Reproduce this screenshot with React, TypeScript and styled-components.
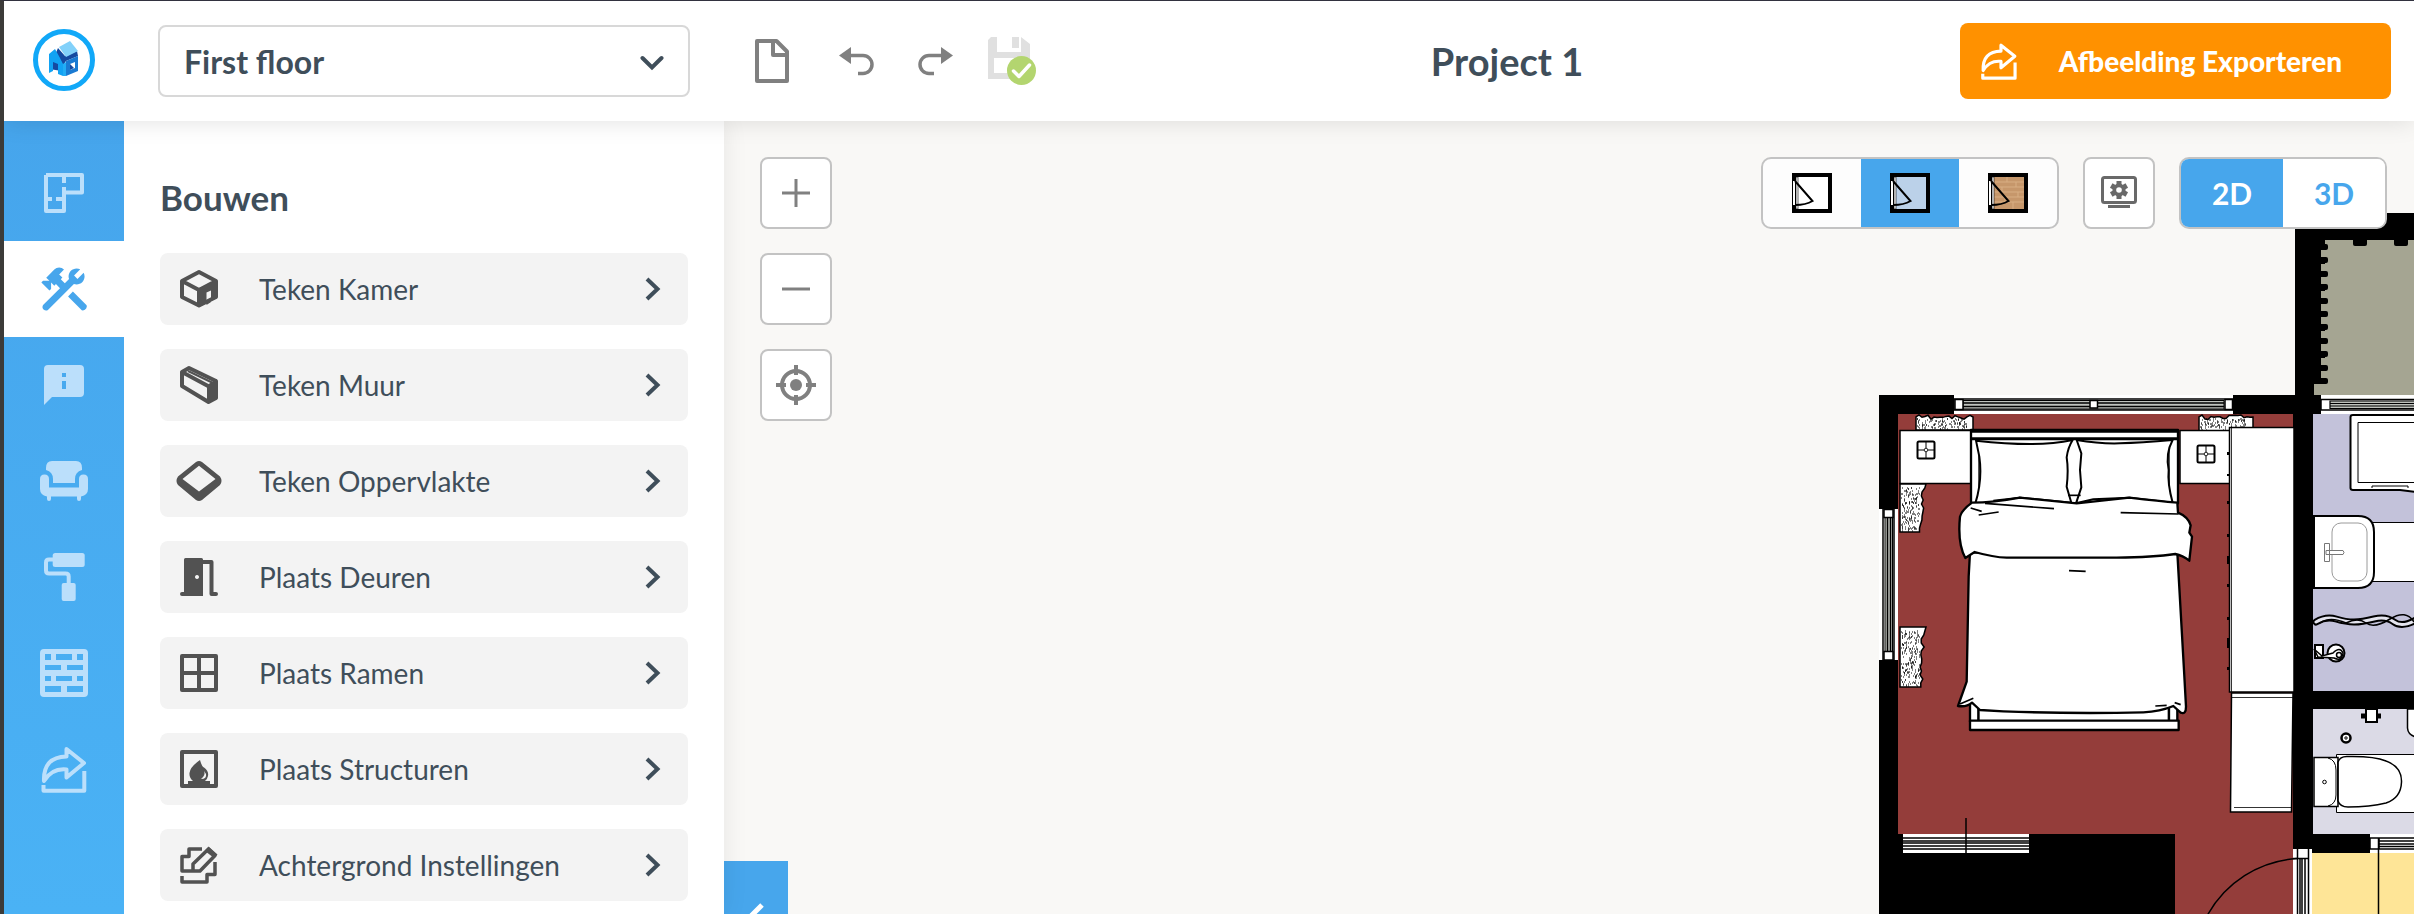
import React from "react";
import styled, { createGlobalStyle } from "styled-components";

const GlobalStyle = createGlobalStyle`
  *, *::before, *::after { box-sizing: border-box; }
  body { margin: 0; font-family: Lato, "Open Sans", sans-serif; color: #3f4e5a; background: #f9f8f6; }
  button, select, h1, h2 { font-family: inherit; color: inherit; margin: 0; }
  button { cursor: pointer; border: 0; padding: 0; background: none; }
  svg { display: block; flex: none; }
`;

const blue = "#47a6ec";
const line = "#c3c3c3";

const Shell = styled.div`
  height: 100vh;
  display: flex;
  flex-direction: column;
  overflow: hidden;
  border-left: 4px solid #3c3b39;
  border-top: 1px solid #32323f;
`;

const Header = styled.header`
  position: relative;
  z-index: 4;
  flex: none;
  height: 120px;
  display: flex;
  align-items: center;
  padding: 0 23px 0 0;
  background: #fff;
  box-shadow: 0 0 24px rgba(0, 0, 0, 0.12);
`;

const LogoLink = styled.a`
  width: 120px;
  display: flex;
  justify-content: center;
`;

const SelectBox = styled.div`
  position: relative;
  width: 532px;
  margin-left: 34px;
`;

const FloorSelect = styled.select`
  appearance: none;
  width: 100%;
  height: 72px;
  padding: 0 72px 0 24px;
  border: 2px solid #d8d8d8;
  border-radius: 8px;
  background: #fff;
  font-size: 32px;
  font-weight: 700;
`;

const SelectArrow = styled.svg`
  position: absolute;
  right: 26px;
  top: 30px;
  pointer-events: none;
`;

const FileActions = styled.div`
  display: flex;
  gap: 32px;
  margin-left: 58px;
`;

const HeaderButton = styled.button`
  color: #808080;
`;

const Title = styled.h1`
  flex: 1;
  padding-left: 18px;
  text-align: center;
  font-size: 38px;
  line-height: 48px;
  font-weight: 700;
`;

const ExportButton = styled.button`
  display: flex;
  align-items: center;
  width: 431px;
  height: 76px;
  padding: 0 20px;
  border-radius: 8px;
  background: #ff9100;
  color: #fff;
  font-size: 28px;
  font-weight: 900;
`;

const ExportLabel = styled.span`
  flex: 1;
  text-align: center;
  padding-left: 12px;
`;

const Body = styled.div`
  flex: 1;
  min-height: 0;
  display: flex;
`;

const Rail = styled.nav`
  position: relative;
  z-index: 3;
  flex: none;
  width: 120px;
  padding-top: 24px;
  display: flex;
  flex-direction: column;
  background: linear-gradient(#46a5ec, #4ab2f5);
`;

const RailButton = styled.button<{ $active?: boolean }>`
  height: 96px;
  display: flex;
  align-items: center;
  justify-content: center;
  color: ${(p) => (p.$active ? blue : "#bbdffb")};
  background: ${(p) => (p.$active ? "#fff" : "transparent")};
`;

const Panel = styled.aside`
  position: relative;
  z-index: 2;
  flex: none;
  width: 600px;
  padding: 54px 36px 0;
  background: #fff;
  box-shadow: 0 0 24px rgba(0, 0, 0, 0.08);
`;

const PanelTitle = styled.h2`
  font-size: 35px;
  line-height: 44px;
  font-weight: 700;
`;

const ToolList = styled.ul`
  list-style: none;
  margin: 34px 0 0;
  padding: 0;
  display: flex;
  flex-direction: column;
  gap: 24px;
`;

const ToolButton = styled.button`
  width: 100%;
  height: 72px;
  padding: 0 27px 0 15px;
  display: flex;
  align-items: center;
  border-radius: 8px;
  background: #f3f3f3;
  font-size: 28px;
  text-align: left;
`;

const ToolIcon = styled.span`
  width: 84px;
  color: #525252;
`;

const ToolLabel = styled.span`
  flex: 1;
`;

const Canvas = styled.main`
  position: relative;
  flex: 1;
  min-width: 0;
  overflow: hidden;
  background: #f9f8f6;
`;

const Plan = styled.svg`
  position: absolute;
  right: 0;
  top: 79px;
`;

const Controls = styled.div`
  position: relative;
  display: flex;
  justify-content: space-between;
  align-items: flex-start;
  padding: 36px 27px 0 36px;
`;

const ZoomStack = styled.div`
  display: flex;
  flex-direction: column;
  gap: 24px;
`;

const SquareButton = styled.button`
  width: 72px;
  height: 72px;
  display: flex;
  align-items: center;
  justify-content: center;
  border: 2px solid ${line};
  border-radius: 8px;
  background: #fff;
  color: #808080;
`;

const ViewBar = styled.div`
  display: flex;
  gap: 24px;
`;

const Segmented = styled.div`
  display: flex;
  height: 72px;
  border: 2px solid ${line};
  border-radius: 10px;
  overflow: hidden;
  background: #fdfdfd;
`;

const StyleSegment = styled.button<{ $active?: boolean }>`
  width: 98px;
  display: flex;
  align-items: center;
  justify-content: center;
  background: ${(p) => (p.$active ? blue : "transparent")};
`;

const ModeSegment = styled.button<{ $active?: boolean }>`
  width: 102px;
  font-size: 30px;
  font-weight: 700;
  color: ${(p) => (p.$active ? "#fff" : blue)};
  background: ${(p) => (p.$active ? blue : "#fff")};
`;

const CollapseTab = styled.button`
  position: absolute;
  left: 0;
  top: 740px;
  width: 64px;
  height: 112px;
  display: flex;
  align-items: center;
  justify-content: center;
  background: ${blue};
`;

/* ---------- icons ---------- */

const Icon = ({ size = 48, box = "0 0 48 48", children }: { size?: number; box?: string; children: React.ReactNode }) => (
  <svg width={size} height={size} viewBox={box} fill="currentColor" aria-hidden="true">
    {children}
  </svg>
);

const stroke4 = { fill: "none", stroke: "currentColor", strokeWidth: 4, strokeLinejoin: "round" as const };

const Logo = () => (
  <svg width="64" height="64" viewBox="0 0 64 64" aria-hidden="true">
    <circle cx="32" cy="31" r="28.500" fill="#fff" stroke="#11a8f8" strokeWidth="5" />
    <path d="M26 19L33 27L45 22L46 27L34 32L30 38L23 26Z" fill="#1549a0" />
    <path d="M17 29L30 35V42L17 40Z" fill="#1549a0" />
    <path d="M17 25L23 20L28 29L31 35V47L26 45V35L21 33V42L17 44Z" fill="#11a2f3" />
    <path d="M27 18L38 12L46 22L34 28Z" fill="#82d1fa" />
    <path d="M34 32L46 27V42L34 47ZM38 35V41L43 39V33Z" fill="#1a7ad2" fillRule="evenodd" />
    <path d="M31 35L34 33V47L31 47Z" fill="#22adf5" />
    <path d="M38 35L42 39L38 41Z" fill="#1549a0" />
  </svg>
);

const ShareIcon = ({ size }: { size?: number }) => (
  <Icon size={size}>
    <g {...stroke4}>
      <path d="M26.500 4L44 18L26.500 32.500V24.500Q12 23 4 36Q3 12 26.500 11.500Z" />
      <path d="M3.500 40V45.700H44.300V26" />
    </g>
  </Icon>
);

const PlanIcon = () => (
  <Icon>
    <path {...stroke4} d="M6 6H42V23.500H24M24 18V42H6V6M24 6V14M6 30H12M16 30H24" />
  </Icon>
);

const BuildIcon = () => (
  <Icon box="1.500 1.500 21 21">
    <path d="M13.780 15.300L19.780 21.300Q20.800 21.600 21.700 20.500Q22.200 19.600 21.890 19.140L15.890 13.140ZM17.500 10c1.930 0 3.500-1.570 3.500-3.500c0-.58-.16-1.120-.41-1.600l-2.700 2.700L16.400 6.110l2.700-2.700C18.620 3.160 18.080 3 17.500 3C15.570 3 14 4.570 14 6.500c0 .41.080.8.210 1.160l-1.850 1.850l-1.780-1.780l.71-.71L9.880 5.610L12 3.490c-1.170-1.170-3.070-1.170-4.240 0L4.220 7.030l1.410 1.410H2.810L2.100 9.150l3.540 3.540l.71-.71V9.150l1.410 1.410l.71-.71l1.780 1.780l-7.410 7.410q-.6 1.200.2 1.900q1 .8 1.920.22L16.340 9.790C16.700 9.920 17.090 10 17.500 10z" />
  </Icon>
);

const InfoIcon = () => (
  <Icon>
    <path fillRule="evenodd" d="M8 4H40a4 4 0 0 1 4 4V32a4 4 0 0 1-4 4H12L4 44V8a4 4 0 0 1 4-4ZM22 12V16H26V12ZM22 20V28H26V20Z" />
  </Icon>
);

const SofaIcon = () => (
  <Icon>
    <path d="M12 4H36Q42 4 42 11V13Q35 15 35 22V26H13V22Q13 15 6 13V11Q6 4 12 4Z" />
    <path d="M0 22Q0 17.500 4.500 17.500T9 22V30.500H39V22Q39 17.500 43.500 17.500T48 22V32Q48 38 41 39.500V42Q41 44 39 44T37 42V39.500H11V42Q11 44 9 44T7 42V39.500Q0 38 0 32Z" />
  </Icon>
);

const RollerIcon = () => (
  <Icon>
    <rect x="12.700" y="0" width="32" height="14" rx="2.500" />
    <path {...stroke4} d="M13 6.500H9Q6 6.500 6 9.500V17.500Q6 20.500 9 20.500H25.500Q28.700 20.500 28.700 23.500V31" />
    <rect x="21.700" y="30" width="14" height="18" rx="2" />
  </Icon>
);

const BrickIcon = () => (
  <Icon>
    <path
      fillRule="evenodd"
      d="M4 0H44a4 4 0 0 1 4 4V44a4 4 0 0 1-4 4H4a4 4 0 0 1-4-4V4a4 4 0 0 1 4-4ZM5 5V11H11V5ZM16 5V11H32V5ZM37 5V11H43V5ZM5 16V21H21V16ZM27 16V21H43V16ZM5 27V32H11V27ZM16 27V32H32V27ZM37 27V32H43V27ZM5 37V43H21V37ZM27 37V43H43V37Z"
    />
  </Icon>
);

const RoomIcon = () => (
  <Icon>
    <path {...stroke4} d="M24 7L41 16V32L24 40.500L7 32V16ZM7 16L24 25L41 16" />
    <path fillRule="evenodd" d="M22 24L42 15V33L24 42L22 41ZM31.500 27.500V40L36 37V25.500Z" />
  </Icon>
);

const WallIcon = () => (
  <Icon>
    <path {...stroke4} d="M14 7L41 20V37L33.500 41L7 25V11ZM7 11L33 25" />
    <path {...stroke4} strokeWidth={2} d="M13 10L38 22" />
    <path d="M32 24L42 18V38L32 42Z" />
  </Icon>
);

const SurfaceIcon = () => (
  <Icon>
    <path fillRule="evenodd" d="M21 5Q24 3 27 5L45 19.500Q48 24 45 28L27 43Q24 45 21 43L3 28Q0 24 3 19.500ZM24 8.700L7.500 22L24 34.500L40.500 22Z" />
  </Icon>
);

const DoorIcon = () => (
  <Icon>
    <path fillRule="evenodd" d="M10.500 5H26.500Q28 5 28 6.500V43H7Q5 43 5 41T7 39H9V6.500Q9 5 10.500 5ZM22 22a2 2 0 1 0 .01 0Z" />
    <path {...stroke4} strokeLinecap="round" d="M28 9H36.500V41H41" />
  </Icon>
);

const WindowIcon = () => (
  <Icon>
    <path {...stroke4} d="M7 7H41V41H7ZM24 7V41M7 24H41" />
  </Icon>
);

const FireIcon = () => (
  <Icon>
    <path {...stroke4} d="M7 7H41V41H7Z" />
    <path d="M25 15Q27 22 29 22.500Q34 26 33 31Q32 35 30 36H35V41H13V36H18Q14 33 14.500 28Q15 22 25 15Z" />
    <path d="M29 26Q31 30 26 34Q32 34 31 29Z" fill="#f3f3f3" />
  </Icon>
);

const EditIcon = () => (
  <Icon>
    <path {...stroke4} strokeWidth={3.500} d="M27 8H14V15.500H7V30H25L40 14.500L33.500 8L18 23V30M7 35V41H32V33.500H40V21" />
    <path d="M33.500 5.500L42.500 13.500L39 17L30 10Z" />
  </Icon>
);

const RowChevron = () => (
  <svg width="16" height="24" viewBox="0 0 16 24" aria-hidden="true">
    <path d="M2 2L12.500 12L2 22" fill="none" stroke="#3f4e5a" strokeWidth="4" />
  </svg>
);

const DocIcon = () => (
  <Icon>
    <path {...stroke4} d="M9 4H28.500L39 14.500V44H9ZM25 4V18H39" />
  </Icon>
);
const UndoIcon = () => (
  <Icon>
    <path {...stroke4} strokeWidth={3.500} d="M23 18.500H35a9 9 0 0 1 0 18H30" />
    <path d="M11 18.500L23 10V27Z" />
  </Icon>
);
const RedoIcon = () => (
  <Icon>
    <path {...stroke4} strokeWidth={3.500} d="M33 18.500H21a9 9 0 0 0 0 18H26" />
    <path d="M45 18.500L33 10V27Z" />
  </Icon>
);
const SaveIcon = () => (
  <Icon>
    <path fill="#e0e0e0" fillRule="evenodd" d="M3 0H9V15H33V0L42 7V42H0V3ZM6 21V36H36V21Z" />
    <rect x="24" y="0" width="7" height="11" fill="#e0e0e0" />
    <circle cx="33.500" cy="33.500" r="14.500" fill="#b3d56f" />
    <path d="M25.500 34L31 39.500L41.500 28" fill="none" stroke="#fff" strokeWidth="3.500" strokeLinecap="round" strokeLinejoin="round" />
  </Icon>
);

const StyleIcon = ({ fill, wood }: { fill: string; wood?: boolean }) => (
  <svg width="40" height="40" viewBox="0 0 40 40" aria-hidden="true">
    <rect width="40" height="40" />
    <rect x="5" y="4" width="31" height="32" fill={fill} />
    {wood && (
      <path d="M6 9H36M6 14H36M6 19H36M6 24H36M6 29H36M19 4V9M28 9V14M14 14V19M30 19V24M17 24V29M25 29V36" stroke="#d8ae84" fill="none" />
    )}
    <rect x="1" y="8" width="2" height="24" fill="#fff" />
    <rect x="4" y="4" width="2" height="32" fill="#fff" stroke="#000" strokeWidth=".6" />
    <path d="M3 8L20.500 28Q14 32 3 32" fill="none" stroke="#000" strokeWidth="2" />
  </svg>
);

const DisplayIcon = () => (
  <svg width="40" height="40" viewBox="0 2 40 40" fill="#696969" aria-hidden="true">
    <g transform="translate(0 3)">
      <rect x="3.500" y="3.500" width="33" height="25" rx="2" fill="none" stroke="#696969" strokeWidth="3" />
      <rect x="9" y="31" width="22" height="3" />
      <g transform="translate(20 16)">
        {[0, 60, 120].map((a) => (
          <rect key={a} x="-2.500" y="-9" width="5" height="18" transform={`rotate(${a})`} />
        ))}
        <circle r="6.500" />
        <circle r="2.800" fill="#fff" />
      </g>
    </g>
  </svg>
);

/* ---------- floor plan ---------- */

const noise = (seed: number) => {
  let s = seed;
  return () => {
    s = (s * 16807) % 2147483647;
    return s / 2147483647;
  };
};

const Curtain = ({ x, y, w, h, seed }: { x: number; y: number; w: number; h: number; seed: number }) => {
  const rnd = noise(seed);
  const horizontal = w > h;
  let d = "";
  if (horizontal) {
    d = `M${x} ${y + h}V${y + 2}`;
    for (let i = 3; i < w; i += 3) d += `L${x + i} ${y + rnd() * 5}`;
    d += `L${x + w} ${y + 2}V${y + h}Z`;
  } else {
    d = `M${x} ${y}H${x + w}`;
    for (let i = 4; i < h; i += 4) d += `L${x + w - 1 - rnd() * 4 - (i / h) * 2} ${y + i}`;
    d += `V${y + h}H${x}Z`;
  }
  let dots = "";
  for (let i = 0; i < (w * h) / 7; i++) {
    dots += `M${Math.round(x + 1 + rnd() * (w - 8))} ${Math.round(y + 4 + rnd() * (h - 5))}h1`;
  }
  return (
    <g stroke="#000">
      <path d={d} fill="#fff" strokeWidth="1.500" />
      <path d={dots} strokeWidth="1" />
    </g>
  );
};

const Lamp = ({ x, y }: { x: number; y: number }) => (
  <g fill="none" stroke="#000">
    <rect x={x - 8.500} y={y - 8.500} width="17" height="17" rx="1.500" strokeWidth="2" />
    <path d={`M${x} ${y - 8}v16M${x - 8} ${y}h16`} strokeWidth="1" />
    <circle cx={x} cy={y} r="1.800" fill="#fff" strokeWidth=".8" />
  </g>
);

const Bed = () => (
  <g transform="translate(1860 370) scale(.33333)" fill="#fff" stroke="#000" strokeWidth="7" strokeLinejoin="round">
    <path d="M333 180H954V400H333Z" />
    <path d="M336 184H951M333 206H951" strokeWidth="9" />
    <path d="M357 206V400M927 206V400" strokeWidth="4" />
    <path d="M348 212Q440 222 510 222T638 210Q624 232 620 262Q626 300 620 350L634 398L480 383Q420 398 346 400Q368 330 358 260Z" strokeWidth="6" />
    <path d="M650 210Q720 222 780 220T938 210Q916 250 926 300Q922 340 938 398L808 383L700 388L648 400L664 352L660 300L664 250Z" strokeWidth="6" />
    <path d="M624 376H662" strokeWidth="5" />
    <path d="M330 970H355V1055H330ZM927 970H952V1055H927Z" />
    <path d="M357 1010H925V1052H357Z" strokeWidth="4" />
    <path d="M330 1052H956V1080H330Z" />
    <path d="M330 548L326 620L320 935L294 1008Q320 1012 336 998L360 1020L430 1024Q640 1032 850 1027Q900 1025 940 1008L962 1028Q978 1034 978 1010L972 900L952 548Z" />
    <path d="M336 398Q305 420 300 440Q292 520 316 564L344 546Q400 562 440 563H770Q880 562 946 552Q968 556 988 572L996 500L988 488L992 466Q984 440 954 428L952 398Q900 394 808 383L650 400L480 383Q400 398 336 398Z" />
    <path d="M375 400L582 416M356 435L416 426M332 414L365 424M782 428L956 432M627 602L677 604M886 1008L920 1006M944 998L962 1004M300 1002L340 985M400 392L480 383" fill="none" strokeWidth="5" />
  </g>
);

const teethSide = Array.from({ length: 11 }, (_, i) => 247 + Math.round(i * 13.4));

const towel = "M2316 622Q2326 616 2336 619T2354 622T2374 619T2394 622T2416 620";

const FloorPlan = () => (
  <Plan width="544" height="714" viewBox="1870 200 544 714" role="img" aria-label="Plattegrond">
    {/* floors */}
    <path d="M1898 414H2295V914H2175V834H1898Z" fill="#943d3a" />
    <rect x="2313" y="240" width="101" height="156" fill="#a5a592" />
    <rect x="2313" y="414" width="101" height="278" fill="#c3c2da" />
    <rect x="2313" y="708" width="101" height="127" fill="#dbdae6" />
    <rect x="2312" y="852" width="102" height="62" fill="#fee597" />

    {/* walls */}
    <path d="M1879 395H1954V414H1898V509H1879ZM1879 660H1898V834H2175V914H1879ZM2233 395H2295V213H2414V240H2325V384H2314V395H2321V414H2313V691H2414V709H2313V834H2370V853H2312V849H2293V414H2233Z" />
    {teethSide.map((y) => (
      <rect key={y} x="2318" y={y - 3} width="10" height="6" rx="2" />
    ))}
    <rect x="2353" y="238" width="14" height="8" rx="2" />
    <rect x="2394" y="238" width="14" height="8" rx="2" />
    {teethSide.slice(1).map((y) => (
      <rect key={y} x="2321" y={y - 10} width="5" height="7" fill="#a5a592" />
    ))}

    {/* windows */}
    <g fill="#fff" stroke="#000">
      <rect x="1954" y="395" width="279" height="19" stroke="none" />
      <path d="M1954 399H2233V410H1954Z" strokeWidth="1.500" />
      <path d="M1963 400.500H2224V409H1963Z" fill="#bfc2bd" strokeWidth="1" />
      <path d="M1963 403H2224M1963 406.500H2224" strokeWidth="1.500" />
      <path d="M1955 399.500H1963V409.500H1955ZM2090 400.500H2097.500V408H2090ZM2225 399.500H2232.500V409.500H2225Z" strokeWidth="1.500" />
      <rect x="1879" y="509" width="19" height="151" stroke="none" />
      <path d="M1883 509V660M1894 509V660" strokeWidth="1.500" />
      <path d="M1885 517H1892.500V652H1885Z" fill="#bfc2bd" strokeWidth="1" />
      <path d="M1887.500 518V651M1890.500 518V651" strokeWidth="1.500" />
      <path d="M1884 509.500H1893V517.500H1884ZM1884 651.500H1893V660H1884Z" strokeWidth="1.500" />
      <rect x="2321" y="395" width="93" height="19" stroke="none" />
      <path d="M2321 399.500H2416V410H2321Z" strokeWidth="1.500" />
      <path d="M2330 401V408.500H2416V401ZM2330 403.500H2416M2330 406H2416" fill="#bfc2bd" strokeWidth="1.200" />
      <rect x="2370" y="834" width="44" height="19" stroke="none" />
      <path d="M2370 838H2416V849H2370ZM2379 841H2416M2379 844H2416M2379 846.500H2416M2379 838V849" strokeWidth="1.500" />
      <rect x="1903" y="834" width="126" height="19" stroke="none" />
      <path d="M1903 838H2029M1903 841H2029M1903 843H2029M1903 846H2029M1903 849H2029" strokeWidth="1.500" />
      <path d="M1966 818V853M2378.500 838V914" strokeWidth="1.500" />
      <rect x="2293" y="849" width="19" height="65" stroke="none" />
      <path d="M2297.500 849V916M2308.500 849V916M2300 858V916M2302 858V916M2305 858V916M2293 858.500H2308" strokeWidth="1.500" />
      <path d="M2297 858.500A110 110 0 0 0 2207 916" fill="none" strokeWidth="1.500" />
    </g>

    {/* bedroom furniture */}
    <Curtain x={1916} y={415} w={57} h={15} seed={11} />
    <Curtain x={2199} y={415} w={54} h={16} seed={29} />
    <g fill="#fff" stroke="#000" strokeWidth="1.500">
      <rect x="1900" y="430.500" width="71" height="53" />
      <rect x="2180" y="430.500" width="50" height="53" />
    </g>
    <Lamp x={1926} y={450} />
    <Lamp x={2206} y={454} />
    <Curtain x={1900} y={484} w={26} h={48} seed={5} />
    <Curtain x={1900} y={627} w={26} h={60} seed={17} />
    <Bed />
    <g fill="#fff" stroke="#000" strokeWidth="1.500">
      <path d="M2229.500 427.500H2294V692H2229.500Z" />
      <path d="M2231.500 693H2293L2291.500 812H2230.500Z" />
      <path d="M2231.500 428V692M2232 697.500H2293M2234 807.500H2291" strokeWidth=".8" />
      <path d="M2228 452v3M2228 474v2M2228 501v3M2228 534v3M2228 556v8M2228 584v3M2228 617v3M2228 638v10M2228 667v3" strokeWidth="2" />
    </g>

    {/* bathroom */}
    <g fill="#fff" stroke="#000" strokeWidth="1.500">
      <path d="M2416 415H2353Q2350.500 415 2350.500 417V488Q2350.500 490 2353 490H2400L2416 492" strokeWidth="2" />
      <path d="M2416 422.500H2358V482.500H2416M2372 488V486H2408V488" strokeWidth="1" />
      <rect x="2370" y="522.500" width="50" height="59" strokeWidth="1" />
      <path d="M2314 516H2358Q2374 516 2374 532V572Q2374 588 2358 588H2314Z" strokeWidth="2" />
      <rect x="2332" y="523" width="35" height="58" rx="9" stroke="#9a9a9a" strokeWidth="1" />
      <path d="M2324.500 543.500h5v18h-5ZM2326 550.500H2343Q2345 552.500 2343 554.500H2326Z" stroke="#777" strokeWidth="1" />
      <path d={towel} fill="none" strokeWidth="7" strokeLinecap="round" />
      <path d={towel} fill="none" stroke="#e4e4ee" strokeWidth="3" strokeLinecap="round" />
      <path d="M2320 623Q2330 616 2346 623Q2358 617 2366 623T2390 619T2414 622" fill="none" />
      <rect x="2315" y="645" width="8" height="13" strokeWidth="2" />
      <circle cx="2336" cy="653" r="8.500" strokeWidth="2" />
      <path d="M2314 649L2322 656L2333 653Q2340 646 2343 653Q2342 662 2334 658L2318 657Z" />
      <circle cx="2339" cy="655" r="2.500" />
    </g>

    {/* toilet */}
    <g fill="#fff" stroke="#000" strokeWidth="1.500">
      <path d="M2361 716h20" strokeWidth="5" />
      <rect x="2366" y="709" width="11" height="13" strokeWidth="2" />
      <circle cx="2346" cy="738" r="4.500" strokeWidth="2.500" />
      <circle cx="2346" cy="738" r="1.200" strokeWidth="1" />
      <path d="M2407.500 709V728Q2408 735 2416 737V709Z" />
      <path d="M2336.500 754.500H2416V812.500H2336.500Z" strokeWidth="1" />
      <path d="M2314 757.500H2338V806.500H2314Z" strokeWidth="1.500" />
      <path d="M2338 762Q2340 756 2348 756.500Q2374 756 2386 761Q2402 767 2401.500 782Q2401 798 2386 803Q2370 807 2348 807Q2340 807 2338 801Z" />
      <path d="M2328 758Q2336 760 2336 770V795Q2336 804 2328 806M2338 762V801" fill="none" strokeWidth="1" />
      <circle cx="2324.500" cy="782" r="1.800" strokeWidth="1" />
    </g>
  </Plan>
);

/* ---------- page ---------- */

const railItems = [
  { label: "Plattegrond", icon: <PlanIcon /> },
  { label: "Bouwen", icon: <BuildIcon />, active: true },
  { label: "Info", icon: <InfoIcon /> },
  { label: "Meubels", icon: <SofaIcon /> },
  { label: "Verf", icon: <RollerIcon /> },
  { label: "Materialen", icon: <BrickIcon /> },
  { label: "Delen", icon: <ShareIcon /> },
];

const tools = [
  { label: "Teken Kamer", icon: <RoomIcon /> },
  { label: "Teken Muur", icon: <WallIcon /> },
  { label: "Teken Oppervlakte", icon: <SurfaceIcon /> },
  { label: "Plaats Deuren", icon: <DoorIcon /> },
  { label: "Plaats Ramen", icon: <WindowIcon /> },
  { label: "Plaats Structuren", icon: <FireIcon /> },
  { label: "Achtergrond Instellingen", icon: <EditIcon /> },
];

export default function App() {
  return (
    <Shell>
      <GlobalStyle />
      <Header>
        <LogoLink href="#" aria-label="Home">
          <Logo />
        </LogoLink>
        <SelectBox>
          <FloorSelect aria-label="Verdieping" defaultValue="first">
            <option value="first">First floor</option>
          </FloorSelect>
          <SelectArrow width="24" height="16" viewBox="0 0 24 16" aria-hidden="true">
            <path d="M2.500 3L12 12.500L21.500 3" fill="none" stroke="#3f4e5a" strokeWidth="4" strokeLinecap="round" />
          </SelectArrow>
        </SelectBox>
        <FileActions>
          <HeaderButton aria-label="Nieuw"><DocIcon /></HeaderButton>
          <HeaderButton aria-label="Ongedaan maken"><UndoIcon /></HeaderButton>
          <HeaderButton aria-label="Opnieuw"><RedoIcon /></HeaderButton>
          <HeaderButton aria-label="Opslaan"><SaveIcon /></HeaderButton>
        </FileActions>
        <Title>Project 1</Title>
        <ExportButton>
          <ShareIcon size={38} />
          <ExportLabel>Afbeelding Exporteren</ExportLabel>
        </ExportButton>
      </Header>
      <Body>
        <Rail>
          {railItems.map((item) => (
            <RailButton key={item.label} aria-label={item.label} $active={item.active}>
              {item.icon}
            </RailButton>
          ))}
        </Rail>
        <Panel>
          <PanelTitle>Bouwen</PanelTitle>
          <ToolList>
            {tools.map((tool) => (
              <li key={tool.label}>
                <ToolButton>
                  <ToolIcon>{tool.icon}</ToolIcon>
                  <ToolLabel>{tool.label}</ToolLabel>
                  <RowChevron />
                </ToolButton>
              </li>
            ))}
          </ToolList>
        </Panel>
        <Canvas>
          <FloorPlan />
          <Controls>
            <ZoomStack>
              <SquareButton aria-label="Inzoomen">
                <Icon><path d="M10 24H38M24 10V38" stroke="currentColor" strokeWidth="3" /></Icon>
              </SquareButton>
              <SquareButton aria-label="Uitzoomen">
                <Icon><path d="M10 24H38" stroke="currentColor" strokeWidth="3" /></Icon>
              </SquareButton>
              <SquareButton aria-label="Centreren">
                <Icon>
                  <circle cx="24" cy="24" r="14" {...stroke4} />
                  <circle cx="24" cy="24" r="6" />
                  <path {...stroke4} d="M24 4V14M24 34V44M4 24H14M34 24H44" />
                </Icon>
              </SquareButton>
            </ZoomStack>
            <ViewBar>
              <Segmented>
                <StyleSegment aria-label="Zwart-wit"><StyleIcon fill="#fff" /></StyleSegment>
                <StyleSegment aria-label="Kleur" $active><StyleIcon fill="#bbd1e9" /></StyleSegment>
                <StyleSegment aria-label="Textuur"><StyleIcon fill="#c6976b" wood /></StyleSegment>
              </Segmented>
              <SquareButton aria-label="Weergave"><DisplayIcon /></SquareButton>
              <Segmented>
                <ModeSegment $active>2D</ModeSegment>
                <ModeSegment>3D</ModeSegment>
              </Segmented>
            </ViewBar>
          </Controls>
          <CollapseTab aria-label="Paneel inklappen">
            <svg width="24" height="28" viewBox="0 0 24 28" aria-hidden="true">
              <path d="M18 2L6 14L18 26" fill="none" stroke="#fff" strokeWidth="5" />
            </svg>
          </CollapseTab>
        </Canvas>
      </Body>
    </Shell>
  );
}
